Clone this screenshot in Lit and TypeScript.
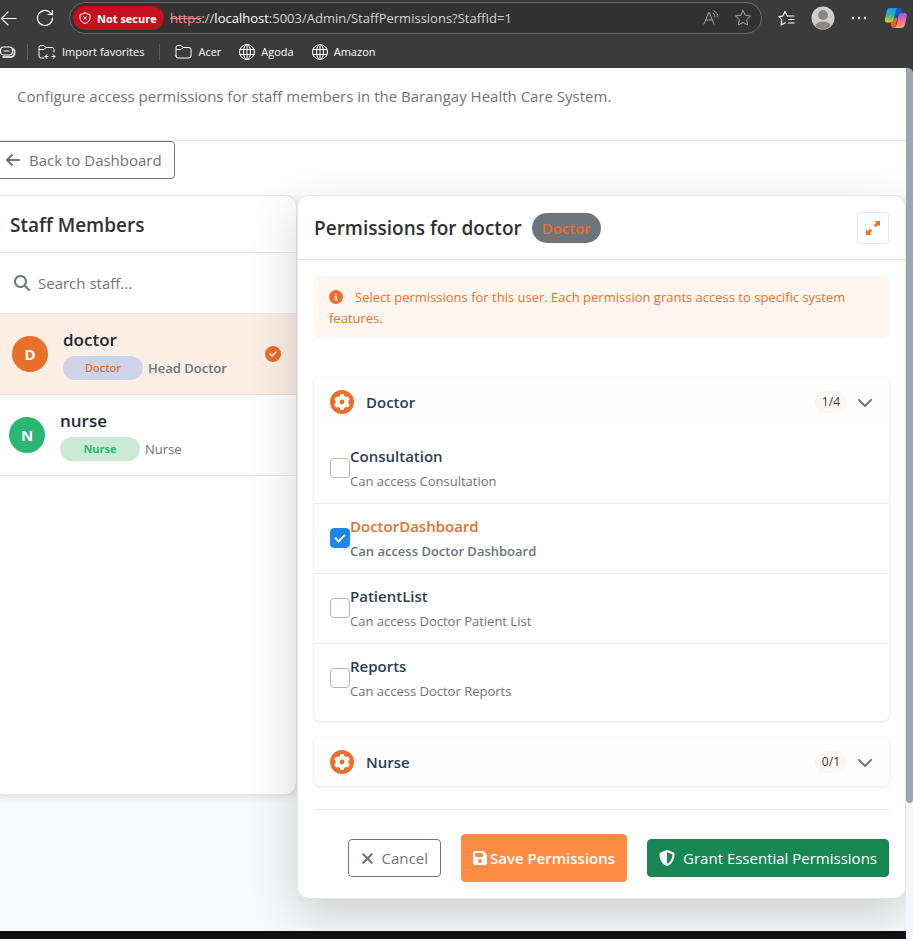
import { LitElement, html, css, svg, nothing } from "lit";
import { customElement, property, state } from "lit/decorators.js";
import { classMap } from "lit/directives/class-map.js";

const stroke = (size: number, body: unknown, width = 1) => html`<svg
  width=${size} height=${size} viewBox="0 0 ${size} ${size}" fill="none"
  stroke="currentColor" stroke-width=${width} stroke-linecap="round"
  stroke-linejoin="round" aria-hidden="true">${body}</svg>`;

const solid = (w: number, h: number, box: string, d: string) => html`<svg
  width=${w} height=${h} viewBox=${box} fill="currentColor" aria-hidden="true"><path d=${d}></path></svg>`;

const folder = svg`<path d="M1 13V4.500Q1 2.500 3 2.500H6L8 4.500H14Q16 4.500 16 6.500V13Q16 15 14 15H3Q1 15 1 13ZM1.500 6.500H6L8 4.500"/>`;
const globe = svg`<circle cx="8" cy="8" r="7.500"/><ellipse cx="8" cy="8" rx="3.500" ry="7.500"/><path d="M1 5.500H15M1 10.500H15M8 .5V15.500"/>`;

const ARROW_LEFT = "M9.400 233.400c-12.500 12.500-12.500 32.800 0 45.300l160 160c12.500 12.500 32.800 12.500 45.300 0s12.500-32.800 0-45.300L109.200 288 416 288c17.700 0 32-14.300 32-32s-14.300-32-32-32l-306.700 0L214.600 118.600c12.500-12.500 12.500-32.800 0-45.300s-32.800-12.500-45.300 0l-160 160z";
const SEARCH = "M416 208c0 45.900-14.900 88.300-40 122.700L502.600 457.400c12.500 12.500 12.500 32.800 0 45.300s-32.800 12.500-45.300 0L330.700 376c-34.400 25.200-76.800 40-122.700 40C93.100 416 0 322.900 0 208S93.100 0 208 0S416 93.100 416 208zM208 352a144 144 0 1 0 0-288 144 144 0 1 0 0 288z";
const CHECK_CIRCLE = "M256 512A256 256 0 1 0 256 0a256 256 0 1 0 0 512zM369 209L241 337c-9.400 9.400-24.600 9.400-33.900 0l-64-64c-9.400-9.400-9.400-24.600 0-33.900s24.600-9.400 33.900 0l47 47L335 175c9.400-9.400 24.600-9.400 33.900 0s9.400 24.600 0 33.900z";
const INFO_CIRCLE = "M256 512A256 256 0 1 0 256 0a256 256 0 1 0 0 512zM216 336l24 0 0-64-24 0c-13.300 0-24-10.700-24-24s10.700-24 24-24l48 0c13.300 0 24 10.700 24 24l0 88 8 0c13.300 0 24 10.700 24 24s-10.700 24-24 24l-80 0c-13.300 0-24-10.700-24-24s10.700-24 24-24zm40-208a32 32 0 1 1 0 64 32 32 0 1 1 0-64z";
const CHEVRON = "M233.400 406.600c12.500 12.500 32.800 12.500 45.300 0l192-192c12.500-12.500 12.500-32.800 0-45.300s-32.800-12.500-45.300 0L256 338.700 86.600 169.400c-12.500-12.500-32.800-12.500-45.300 0s-12.500 32.800 0 45.300l192 192z";
const XMARK = "M342.600 150.600c12.500-12.500 12.500-32.800 0-45.300s-32.800-12.500-45.300 0L192 210.700 86.600 105.400c-12.500-12.500-32.800-12.500-45.300 0s-12.500 32.800 0 45.300L146.700 256 41.400 361.400c-12.500 12.500-12.500 32.800 0 45.300s32.800 12.500 45.300 0L192 301.300 297.400 406.600c12.500 12.500 32.800 12.500 45.300 0s12.500-32.800 0-45.300L237.300 256 342.600 150.600z";
const SAVE = "M64 32C28.700 32 0 60.700 0 96L0 416c0 35.300 28.700 64 64 64l320 0c35.300 0 64-28.700 64-64l0-242.700c0-17-6.700-33.300-18.700-45.300L352 50.700C340 38.700 323.700 32 306.700 32L64 32zm0 96c0-17.700 14.300-32 32-32l192 0c17.700 0 32 14.300 32 32l0 64c0 17.700-14.300 32-32 32L96 224c-17.700 0-32-14.300-32-32l0-64zM224 288a64 64 0 1 1 0 128 64 64 0 1 1 0-128z";
const SHIELD = "M256 0c4.600 0 9.200 1 13.400 2.900L457.700 82.800c22 9.300 38.400 31 38.300 57.200c-.5 99.200-41.300 280.700-213.600 363.200c-16.700 8-36.100 8-52.800 0C57.300 420.700 16.500 239.200 16 140c-.1-26.200 16.300-47.900 38.300-57.200L242.700 2.900C246.800 1 251.400 0 256 0zm0 66.800l0 378.100C394 378 431.100 230.100 432 141.400L256 66.800z";

@customElement("browser-bar")
export class BrowserBar extends LitElement {
  static styles = css`
    :host { display: block; background: #3b3b3b; color: #fff; height: 68px; overflow: hidden; }
    button, a { font: inherit; color: inherit; background: none; border: 0; padding: 0; text-decoration: none; display: flex; align-items: center; }
    svg { display: block; flex: none; }
    .tools { display: flex; align-items: center; height: 36px; padding-right: 4px; }
    .reload { margin: 0 15px 0 19px; }
    .address { flex: 1; min-width: 0; box-sizing: border-box; height: 32px; border: 1px solid #6b6b6b; border-radius: 16px; background: #323232; display: flex; align-items: center; padding: 0 9px 0 3px; }
    .warn { box-sizing: border-box; height: 24px; width: 91px; border-radius: 12px; background: #c50f1f; font-size: 11px; font-weight: 700; gap: 6px; padding-left: 6px; flex: none; white-space: nowrap; }
    .url { flex: 1; min-width: 0; margin-left: 6px; font-size: 13px; color: #d2d2d2; white-space: nowrap; overflow: hidden; }
    .scheme { color: #e8928f; text-decoration: line-through; }
    .hostname { color: #fff; }
    .inside { display: flex; gap: 15px; color: #a5a5a5; }
    .outside { display: flex; align-items: center; gap: 16px; margin-left: 16px; }
    .marks { display: flex; align-items: center; height: 31px; font-size: 11px; white-space: nowrap; }
    .marks a { gap: 6px; }
    .sep { width: 1px; height: 16px; background: #5f5f5f; margin: 0 10px 0 11px; }
    .sep.wide { margin: 0 15px; }
    .links { display: flex; gap: 18px; }
  `;
  render() {
    return html`
      <div class="tools">
        <button aria-label="Back">${stroke(17, svg`<path d="M1.500 8.500H16M8 2L1.500 8.500L8 15"/>`, 1.2)}</button>
        <button class="reload" aria-label="Refresh">${stroke(18, svg`<path d="M16.500 9A7.500 7.500 0 1 1 14 3.400L16 5.500M16.500 1.500V5.500H12"/>`, 1.2)}</button>
        <div class="address">
          <button class="warn">${stroke(12, svg`<path d="M6 .8Q8 2.300 11 2.500V6Q11 9.800 6 11.500Q1 9.800 1 6V2.500Q4 2.300 6 .8ZM4.500 4.500L7.500 7.500M7.500 4.500L4.500 7.500"/>`)}Not secure</button>
          <div class="url" role="textbox" aria-label="Address"><span class="scheme">https</span>://<span class="hostname">localhost</span>:5003/Admin/StaffPermissions?StaffId=1</div>
          <div class="inside">
            <button aria-label="Read aloud">${stroke(16, svg`<path d="M1 14L6 2L11 14M3 10H9M10 3Q12 4.500 12 7M11 .8Q15 3 15 7"/>`)}</button>
            <button aria-label="Add to favorites">${stroke(18, svg`<path d="M9 1.500L11.300 6.200L16.500 7L12.700 10.600L13.600 16L9 13.500L4.400 16L5.300 10.600L1.500 7L6.700 6.200Z"/>`)}</button>
          </div>
        </div>
        <div class="outside">
          <button aria-label="Favorites">${stroke(17, svg`<path d="M9.500 6H16M10.500 9.500H16M10.500 13H16M9 5.500L7 1.500L4.800 6L1 6.700L3.800 9.800L3.200 15L7.300 12.800"/>`, 1.2)}</button>
          <button aria-label="Profile"><svg width="24" height="24" viewBox="0 0 24 24"><defs><clipPath id="c"><circle cx="12" cy="12" r="11"/></clipPath></defs><circle cx="12" cy="12" r="11.500" fill="#d0cecb"/><g fill="#8b8885" clip-path="url(#c)"><circle cx="12" cy="9" r="5"/><ellipse cx="12" cy="21" rx="8" ry="5.500"/></g></svg></button>
          <button aria-label="Settings and more">${solid(16, 16, "0 0 16 16", "M3.200 8A1.200 1.200 0 1 1 .8 8A1.200 1.200 0 1 1 3.200 8ZM9.200 8A1.200 1.200 0 1 1 6.800 8A1.200 1.200 0 1 1 9.200 8ZM15.200 8A1.200 1.200 0 1 1 12.800 8A1.200 1.200 0 1 1 15.200 8Z")}</button>
          <button aria-label="Copilot">
            <svg width="26" height="22" viewBox="0 0 26 22">
              <defs>
                <linearGradient id="a" x1="0" y1="0" x2="0" y2="1"><stop offset="0" stop-color="#1b93ee"/><stop offset=".45" stop-color="#2cb5b8"/><stop offset=".75" stop-color="#8ac54d"/><stop offset="1" stop-color="#f4ce1f"/></linearGradient>
                <linearGradient id="b" x1="0" y1="0" x2="0" y2="1"><stop offset="0" stop-color="#a25be8"/><stop offset=".5" stop-color="#ec6aa0"/><stop offset="1" stop-color="#fda34d"/></linearGradient>
              </defs>
              <path d="M12 1H16.500Q18.500 1 19.200 3L20 6H17Q15.500 6 15 8L14 11H10Z" fill="#1557cf"/>
              <path d="M6 1H14.500Q13 2 12.300 5L10.500 13Q10 15.500 7.500 15.500H4.500Q1 15.500 2 11.500L3.800 3.500Q4.500 1 6 1Z" fill="url(#a)"/>
              <path d="M8 15.500Q10 15 10.700 13L11.500 11H14.500L13 17Q12.500 21 11 21Q8.500 21 8 18.500Z" fill="#ee5a3a"/>
              <path d="M18 6H21.500Q24.500 6 23.700 9.500L22 17.500Q21 21 18.500 21H11Q13 20.500 13.700 17L15.500 8.500Q16.200 6 18 6Z" fill="url(#b)"/>
            </svg>
          </button>
        </div>
      </div>
      <nav class="marks" aria-label="Favorites bar">
        <button aria-label="Saved tabs">${stroke(16, svg`<rect x=".5" y="3" width="12" height="8" rx="3"/><path d="M4 7H9"/><path d="M13.500 5Q14.700 6 14.700 8Q14.700 13 10.500 13H3" stroke-width="1.500"/>`, 1.2)}</button>
        <span class="sep"></span>
        <a href="#import">${stroke(18, svg`<path d="M6 15H3Q1 15 1 13V4.500Q1 2.500 3 2.500H6L8 4.500H14Q16 4.500 16 6.500V9M1.500 6.500H6L8 4.500M9 11.500L7 13.500L9 15.500M7 13.500H10M15 11.500L17 13.500L15 15.500M17 13.500H14"/>`)}Import favorites</a>
        <span class="sep wide"></span>
        <span class="links">
          <a href="#acer">${stroke(17, folder)}Acer</a>
          <a href="#agoda">${stroke(16, globe)}Agoda</a>
          <a href="#amazon">${stroke(16, globe)}Amazon</a>
        </span>
      </nav>`;
  }
}

interface Staff { name: string; role: string; title: string; kind: string }

@customElement("staff-list")
export class StaffList extends LitElement {
  @property({ attribute: false }) staff: Staff[] = [];
  @property() selected = "";

  static styles = css`
    :host { display: block; box-sizing: border-box; min-height: 600px; background: #fff; border: 1px solid #e5e7e9; border-radius: 12px; box-shadow: 0 2px 8px rgba(0, 0, 0, 0.1); overflow: hidden; }
    h2 { margin: 0; padding: 2px 17px 0; font-size: 19px; line-height: 54px; font-weight: 600; color: #2f3133; border-bottom: 1px solid #e5e7e9; }
    .search { display: flex; align-items: center; gap: 8px; height: 60px; padding: 0 21px; color: #6c757d; border-bottom: 1px solid #e5e7e9; }
    input { flex: 1; min-width: 0; border: 0; outline: 0; padding: 0; background: none; font: inherit; font-size: 15px; color: inherit; }
    input::placeholder { color: #6c757d; opacity: 1; }
    .item { display: flex; align-items: center; gap: 15px; width: 100%; height: 81px; padding: 0 15px 0 16px; border: 0; border-bottom: 1px solid #e5e7e9; background: none; font: inherit; text-align: left; }
    .item.on { background: #fdeee5; border-left: 3px solid #e8702a; border-bottom-color: #ecd8ce; }
    .avatar { flex: none; width: 36px; height: 36px; border-radius: 50%; background: #e8702a; color: #fff; font-size: 15px; font-weight: 700; line-height: 36px; text-align: center; }
    .nurse .avatar { background: #2cb673; }
    .info { flex: 1; padding-bottom: 2px; }
    .name { display: block; font-size: 17px; line-height: 26px; font-weight: 600; color: #1c2935; margin-bottom: 3px; }
    .meta { display: flex; align-items: center; gap: 5px; font-size: 13px; color: #6c757d; }
    .on .meta { font-weight: 600; }
    .badge { width: 80px; border-radius: 12px; background: #cfd3e8; color: #e8702a; font-size: 11px; line-height: 24px; font-weight: 600; text-align: center; }
    .nurse .badge { background: #cbead4; color: #2cb673; font-weight: 700; }
    .tick { display: flex; color: #e8702a; }
  `;
  private choose(name: string) {
    this.dispatchEvent(new CustomEvent("choose", { detail: name }));
  }
  render() {
    return html`
      <h2>Staff Members</h2>
      <label class="search">${solid(16, 16, "0 0 512 512", SEARCH)}<input type="text" placeholder="Search staff..." aria-label="Search staff" /></label>
      ${this.staff.map((s) => {
        const on = s.name === this.selected;
        return html`<button class=${classMap({ item: true, on, [s.kind]: true })} @click=${() => this.choose(s.name)}>
          <span class="avatar">${s.name[0].toUpperCase()}</span>
          <span class="info"><span class="name">${s.name}</span><span class="meta"><span class="badge">${s.role}</span>${s.title}</span></span>
          ${on ? html`<span class="tick">${solid(16, 16, "0 0 512 512", CHECK_CIRCLE)}</span>` : nothing}
        </button>`;
      })}`;
  }
}

interface Permission { name: string; text: string; on: boolean }

@customElement("permission-group")
export class PermissionGroup extends LitElement {
  @property() heading = "";
  @property({ type: Number }) total = 0;
  @property({ attribute: false }) items: Permission[] = [];

  static styles = css`
    :host { display: block; background: #fff; border-radius: 6px; box-shadow: 0 1px 3px rgba(0, 0, 0, 0.12); overflow: hidden; }
    .head { display: flex; align-items: center; width: 100%; height: 49px; padding: 0 16px; border: 0; background: #fefefe; font: inherit; font-size: 15px; font-weight: 600; color: #2c3e50; text-align: left; }
    .gear { display: flex; margin-right: 12px; }
    .title { flex: 1; }
    .count { padding: 0 7px; border-radius: 11px; background: #fff5ef; color: #2c3e50; font-size: 12px; font-weight: 400; line-height: 22px; margin-right: 10px; }
    .chev { display: flex; color: #6c7a89; }
    .rows { padding: 8px 0; }
    .row { display: flex; align-items: center; padding: 11px 16px 12px; border-bottom: 1px solid #e9ebed; }
    .row:last-child { border-bottom: 0; }
    input { appearance: none; flex: none; box-sizing: border-box; width: 20px; height: 20px; margin: 0; border: 1px solid #b5b8bb; border-radius: 4px; background: #fff; display: grid; place-items: center; }
    input:checked { background: #1e88e5; border-color: #1e88e5; }
    input:checked::after { content: ""; box-sizing: border-box; width: 10px; height: 6px; border: solid #fff; border-width: 0 0 2px 2px; rotate: -45deg; margin-bottom: 3px; }
    .name { display: block; font-size: 15px; line-height: 22px; font-weight: 600; color: #2c3e50; margin-bottom: 4px; }
    .text { display: block; font-size: 13px; line-height: 20px; color: #6c757d; }
    .on .name { color: #e8702a; }
    .on .text { font-weight: 600; }
  `;
  private toggle(index: number) {
    this.items = this.items.map((p, i) => (i === index ? { ...p, on: !p.on } : p));
  }
  render() {
    return html`
      <button class="head">
        <span class="gear"><svg width="24" height="24" viewBox="0 0 24 24"><circle cx="12" cy="12" r="12" fill="#e8702a"/><g fill="#fff"><circle cx="12" cy="12" r="6.400"/>${[0, 60, 120].map((a) => svg`<rect x="10" y="4" width="4" height="16" rx="1" transform="rotate(${a} 12 12)"/>`)}</g><circle cx="12" cy="12" r="2.400" fill="#e8702a"/></svg></span>
        <span class="title">${this.heading}</span>
        <span class="count">${this.items.filter((p) => p.on).length}/${this.total}</span>
        <span class="chev">${solid(16, 16, "0 0 512 512", CHEVRON)}</span>
      </button>
      ${this.items.length
        ? html`<div class="rows">${this.items.map((p, i) => html`<label class=${classMap({ row: true, on: p.on })}>
            <input type="checkbox" .checked=${p.on} @change=${() => this.toggle(i)} />
            <span><span class="name">${p.name}</span><span class="text">${p.text}</span></span>
          </label>`)}</div>`
        : nothing}`;
  }
}

@customElement("app-root")
export class AppRoot extends LitElement {
  @state() private selected = "doctor";

  private staff: Staff[] = [
    { name: "doctor", role: "Doctor", title: "Head Doctor", kind: "doctor" },
    { name: "nurse", role: "Nurse", title: "Nurse", kind: "nurse" },
  ];
  private doctorItems: Permission[] = [
    { name: "Consultation", text: "Can access Consultation", on: false },
    { name: "DoctorDashboard", text: "Can access Doctor Dashboard", on: true },
    { name: "PatientList", text: "Can access Doctor Patient List", on: false },
    { name: "Reports", text: "Can access Doctor Reports", on: false },
  ];

  static styles = css`
    :host { display: flex; flex-direction: column; min-height: 100vh; font-family: "Open Sans", "Noto Sans", sans-serif; font-size: 15px; background: #3b3b3b; }
    svg { display: block; flex: none; }
    .viewport { flex: 1; display: flex; }
    .page { flex: 1; min-width: 0; display: flex; flex-direction: column; background: #f8f9fb; overflow: hidden; }
    .scroll { width: 7px; background: #f5f6fb; border-top-right-radius: 6px; }
    .thumb { height: 735px; background: #9ba6b2; border-radius: 0 6px 4px 4px; }
    .top { background: #fff; padding-bottom: 16px; }
    .intro { margin: 0; padding: 16px 17px 31px; line-height: 25px; color: #6c757d; border-bottom: 1px solid #e5e7e9; }
    .btn { box-sizing: border-box; display: inline-flex; align-items: center; height: 38px; padding: 0 12px; border: 1px solid #6c757d; border-radius: 4px; background: #fff; color: #6c757d; font: inherit; text-decoration: none; white-space: nowrap; }
    .back { margin-left: -7px; gap: 9px; }
    .columns { display: grid; grid-template-columns: 305px minmax(0, 1fr); align-items: start; margin-left: -8px; padding-bottom: 32px; }
    .panel { position: relative; background: #fff; border: 1px solid #e5e7e9; border-radius: 12px; box-shadow: 0 16px 48px rgba(0, 0, 0, 0.175); }
    .panel-head { display: flex; align-items: center; height: 63px; padding: 0 16px; border-bottom: 1px solid #e5e7e9; }
    h2 { margin: 0 10px 0 0; font-size: 19px; font-weight: 600; color: #2f3133; }
    .role { padding: 0 10px; border-radius: 15px; background: #6c757d; color: #e8702a; line-height: 30px; font-weight: 600; }
    .expand { box-sizing: border-box; width: 32px; height: 32px; margin-left: auto; padding: 0; display: grid; place-items: center; background: #fff; border: 1px solid #e5e7e9; border-radius: 4px; color: #e8702a; }
    .body { padding: 16px; display: flex; flex-direction: column; }
    .note { margin: 0 0 39px; padding: 11px 15px 9px; border-radius: 6px; background: #fff6f0; color: #e8702a; font-size: 13px; line-height: 21px; }
    .note svg { display: inline-block; vertical-align: -2px; margin-right: 12px; }
    .groups { display: flex; flex-direction: column; gap: 16px; }
    .actions { display: flex; flex-wrap: wrap; align-items: center; justify-content: flex-end; gap: 20px; margin-top: 23px; padding-top: 24px; border-top: 1px solid #e5e7e9; }
    .cancel { gap: 8px; }
    .save { height: 48px; padding: 0 11px; gap: 3px; background: #ff8c42; border-color: #ff8c42; color: #fff; font-weight: 600; }
    .grant { padding: 0 11px; gap: 8px; background: #198754; border-color: #198754; color: #fff; }
    footer { flex: 1; min-height: 8px; background: #111; }
  `;
  render() {
    return html`
      <browser-bar></browser-bar>
      <div class="viewport">
        <div class="page">
          <header class="top">
            <p class="intro">Configure access permissions for staff members in the Barangay Health Care System.</p>
            <a class="btn back" href="#dashboard">${solid(14, 16, "0 0 448 512", ARROW_LEFT)}Back to Dashboard</a>
          </header>
          <main class="columns">
            <staff-list .staff=${this.staff} .selected=${this.selected} @choose=${(e: CustomEvent) => (this.selected = e.detail)}></staff-list>
            <section class="panel">
              <div class="panel-head">
                <h2>Permissions for doctor</h2>
                <span class="role">Doctor</span>
                <button class="expand" aria-label="Expand all">${solid(16, 16, "0 0 16 16", "M9.500 1H15V6.500L13.200 4.700L10.700 7.200L8.800 5.300L11.300 2.800ZM6.500 15H1V9.500L2.800 11.300L5.300 8.800L7.200 10.700L4.700 13.200Z")}</button>
              </div>
              <div class="body">
                <p class="note">${solid(14, 14, "0 0 512 512", INFO_CIRCLE)}Select permissions for this user. Each permission grants access to specific system features.</p>
                <div class="groups">
                  <permission-group heading="Doctor" total="4" .items=${this.doctorItems}></permission-group>
                  <permission-group heading="Nurse" total="1"></permission-group>
                </div>
                <div class="actions">
                  <button class="btn cancel">${solid(13, 17, "0 0 384 512", XMARK)}Cancel</button>
                  <button class="btn save">${solid(14, 16, "0 0 448 512", SAVE)}Save Permissions</button>
                  <button class="btn grant">${solid(16, 16, "0 0 512 512", SHIELD)}Grant Essential Permissions</button>
                </div>
              </div>
            </section>
          </main>
          <footer></footer>
        </div>
        <div class="scroll" aria-hidden="true"><div class="thumb"></div></div>
      </div>`;
  }
}
